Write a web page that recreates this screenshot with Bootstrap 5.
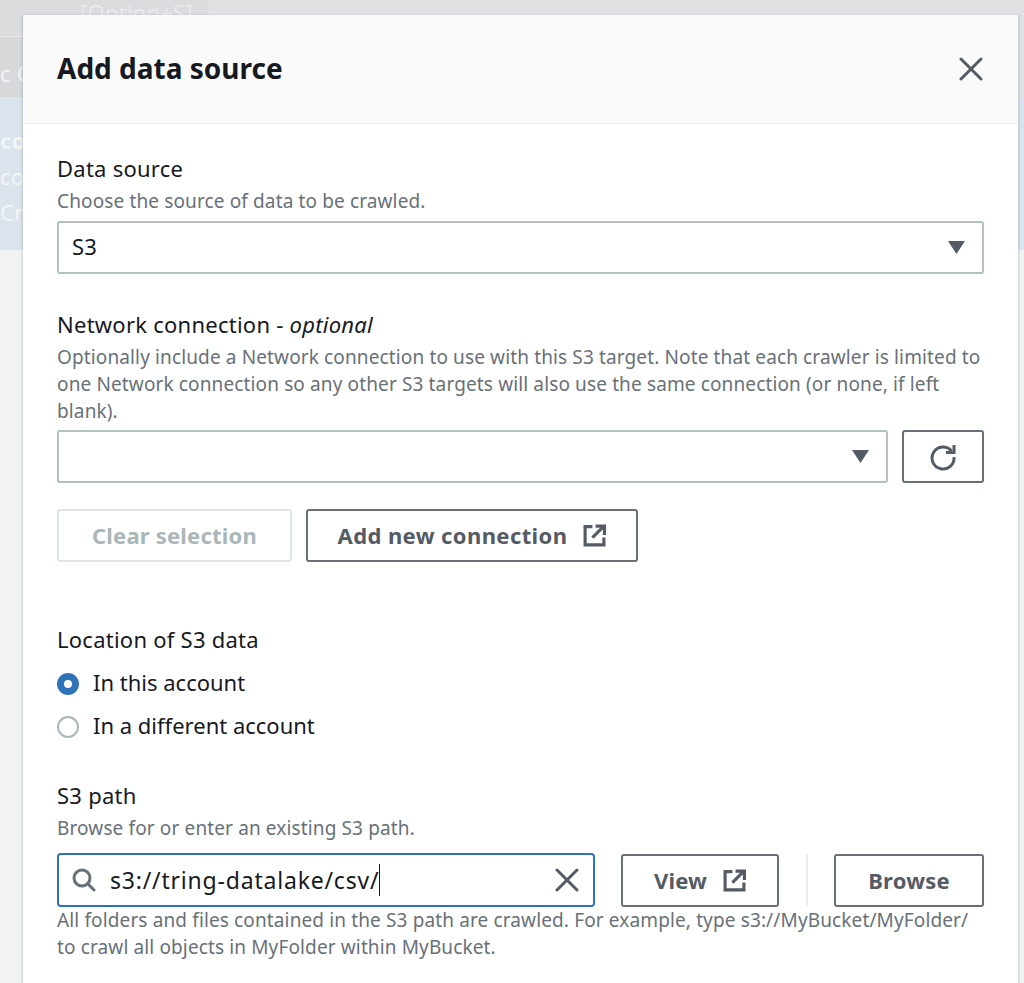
<!DOCTYPE html>
<html lang="en">
<head>
  <meta charset="UTF-8">
  <title>Add data source</title>
  <meta name="viewport" content="width=device-width, initial-scale=1">
  <link href="https://cdn.jsdelivr.net/npm/bootstrap@5.3.3/dist/css/bootstrap.min.css" rel="stylesheet">
  <style>
    html, body {
      height: 100%;
      overflow: hidden;
    }

    body {
      background-color: #f1f3f3;
      font-family: "Noto Sans", "Liberation Sans", sans-serif;
      color: #16191f;
      font-size: 22px;
      letter-spacing: .25px;
    }

    .backdrop-page {
      position: absolute;
      inset: 0;
      color: #f2f4f5;
    }

    .backdrop-top {
      height: 97px;
      background-color: #dfe1e3;
    }

    .backdrop-tab {
      width: 210px;
      height: 37px;
      background-color: #dadcde;
      border-right: 1px solid #e8e9ea;
      border-bottom: 1px solid #e8e9ea;
      padding-left: 80px;
      line-height: 24px;
      color: #e9eaeb;
    }

    .backdrop-cell {
      height: 60px;
      width: 23px;
      overflow: hidden;
      white-space: nowrap;
      background-color: #d6d8da;
      line-height: 72px;
    }

    .backdrop-rows {
      height: 153px;
      background-color: #dbe4ec;
      padding-top: 25px;
      line-height: 36px;
    }

    .modal-box {
      position: absolute;
      left: 23px;
      top: 15px;
      width: 995px;
      height: 968px;
      background-color: #fff;
      box-shadow: 0 1px 2px 1px rgba(0, 28, 36, .16);
    }

    .modal-head {
      height: 109px;
      background-color: #fafafa;
      border-bottom: 1px solid #eaeded;
      padding: 0 35px 0 34px;
    }

    .modal-head h1 {
      font-size: 28px;
      font-weight: 700;
      letter-spacing: 0;
      margin: 0;
    }

    .modal-form {
      padding: 29px 34px 0;
    }

    .field-label {
      line-height: 30px;
      padding-bottom: 2px;
    }

    .field-hint {
      font-size: 19px;
      line-height: 27px;
      letter-spacing: .13px;
      color: #687078;
      margin-top: 3px;
    }

    .select-box {
      height: 53px;
      border: 2px solid #b4c0c1;
      border-radius: 3px;
      padding: 0 17px 0 13px;
      margin-top: 6px;
      background-color: #fff;
    }

    .select-value {
      padding-bottom: 2px;
    }

    .caret-down {
      width: 17px;
      height: 13px;
      color: #545b64;
    }

    .btn-aws {
      height: 53px;
      border: 2px solid #6a7078;
      border-radius: 3px;
      background-color: #fff;
      color: #545b64;
      font-size: 22px;
      font-weight: 700;
      letter-spacing: .2px;
      padding: 0;
    }

    .btn-aws:disabled {
      border-color: #dfe4e4;
      color: #aab7b8;
      background-color: #fff;
      opacity: 1;
    }

    .btn-refresh {
      width: 82px;
      flex: none;
    }

    .btn-clear {
      width: 235px;
    }

    .btn-add {
      width: 332px;
      letter-spacing: .4px;
    }

    .btn-view {
      width: 158px;
      flex: none;
      margin-left: 26px;
    }

    .btn-browse {
      width: 150px;
      flex: none;
    }

    .gap-row {
      gap: 14px;
    }

    .network-title {
      margin-top: 35px;
    }

    .network-select {
      margin-top: 5px;
    }

    .connection-actions {
      margin-top: 26px;
    }

    .location-title {
      margin-top: 62px;
    }

    .radio-first {
      margin-top: 6px;
    }

    .radio-row {
      height: 43px;
      gap: 14px;
      letter-spacing: 0;
    }

    .radio-text {
      padding-bottom: 2px;
    }

    .radio-mark {
      width: 22px;
      height: 22px;
      border-radius: 50%;
      border: 2px solid #aab7b8;
      background-color: #fff;
      flex: none;
    }

    .radio-mark.is-on {
      border: 7px solid #2e73b8;
    }

    .s3-title {
      margin-top: 32px;
    }

    .s3-row {
      margin-top: 11px;
    }

    .search-box {
      width: 538px;
      flex: none;
      height: 54px;
      border: 2.5px solid #2e73b8;
      border-radius: 4px;
      padding: 0 14px 0 13px;
    }

    .search-text {
      border-right: 1px solid #16191f;
      font-size: 23px;
      letter-spacing: .8px;
      line-height: 32px;
      margin-left: 14px;
    }

    .split-line {
      width: 2px;
      height: 53px;
      background-color: #eceeee;
      flex: none;
      margin: 0 26px 0 27px;
    }

    .hint-under {
      margin-top: 0;
    }
  </style>
</head>
<body>

<div class="backdrop-page">
  <div class="backdrop-top">
    <div class="backdrop-tab">[Option+S]</div>
    <div class="backdrop-cell">c C</div>
  </div>
  <div class="backdrop-rows">
    <div class="fw-bold">co</div>
    <div>co</div>
    <div>Cra</div>
  </div>
</div>

<div class="modal-box">
  <div class="modal-head d-flex align-items-center justify-content-between">
    <h1>Add data source</h1>
    <svg width="24" height="24" viewBox="0 0 24 24" fill="none" stroke="#545b64" stroke-width="3" stroke-linecap="round"><path d="M2 2 22 22M22 2 2 22"/></svg>
  </div>

  <form class="modal-form">
    <div class="field-label">Data source</div>
    <div class="field-hint">Choose the source of data to be crawled.</div>
    <div class="select-box d-flex align-items-center justify-content-between">
      <span class="select-value">S3</span>
      <svg class="caret-down" viewBox="0 0 17 13"><path fill="currentColor" d="M0 0h17L8.500 13z"/></svg>
    </div>

    <div class="field-label network-title">Network connection - <em>optional</em></div>
    <div class="field-hint">Optionally include a Network connection to use with this S3 target. Note that each crawler is limited to one Network connection so any other S3 targets will also use the same connection (or none, if left blank).</div>
    <div class="d-flex gap-row network-select">
      <div class="select-box flex-grow-1 d-flex align-items-center justify-content-end mt-0">
        <svg class="caret-down" viewBox="0 0 17 13"><path fill="currentColor" d="M0 0h17L8.500 13z"/></svg>
      </div>
      <button type="button" class="btn btn-aws btn-refresh d-flex align-items-center justify-content-center">
        <svg width="28" height="28" viewBox="0 0 28 28" fill="none" stroke="currentColor" stroke-width="3"><path d="M22.500 8A11 11 0 1 0 25 14"/><path d="M25 2v7.500h-8"/></svg>
      </button>
    </div>

    <div class="d-flex gap-row connection-actions">
      <button type="button" class="btn btn-aws btn-clear" disabled>Clear selection</button>
      <button type="button" class="btn btn-aws btn-add d-flex align-items-center justify-content-center gap-3">
        Add new connection
        <svg width="23" height="23" viewBox="0 0 22 22" fill="none" stroke="currentColor" stroke-width="3"><path d="M9 2.500H2V20h18v-7M12 2h8.500v8.500M20 2 9 13"/></svg>
      </button>
    </div>

    <div class="field-label location-title">Location of S3 data</div>
    <div class="radio-row d-flex align-items-center radio-first">
      <span class="radio-mark is-on"></span>
      <span class="radio-text">In this account</span>
    </div>
    <div class="radio-row d-flex align-items-center">
      <span class="radio-mark"></span>
      <span class="radio-text">In a different account</span>
    </div>

    <div class="field-label s3-title">S3 path</div>
    <div class="field-hint">Browse for or enter an existing S3 path.</div>
    <div class="d-flex align-items-center s3-row">
      <div class="search-box d-flex align-items-center">
        <svg width="24" height="24" viewBox="0 0 24 24" fill="none" stroke="#687078" stroke-width="3" stroke-linecap="round"><circle cx="10" cy="10" r="8"/><path d="M16 16l6 6"/></svg>
        <span class="search-text">s3://tring-datalake/csv/</span>
        <svg class="ms-auto" width="24" height="24" viewBox="0 0 24 24" fill="none" stroke="#545b64" stroke-width="3" stroke-linecap="round"><path d="M2 2 22 22M22 2 2 22"/></svg>
      </div>
      <button type="button" class="btn btn-aws btn-view d-flex align-items-center justify-content-center gap-3">
        View
        <svg width="23" height="23" viewBox="0 0 22 22" fill="none" stroke="currentColor" stroke-width="3"><path d="M9 2.500H2V20h18v-7M12 2h8.500v8.500M20 2 9 13"/></svg>
      </button>
      <span class="split-line"></span>
      <button type="button" class="btn btn-aws btn-browse">Browse</button>
    </div>
    <div class="field-hint hint-under">All folders and files contained in the S3 path are crawled. For example, type s3://MyBucket/MyFolder/ to crawl all objects in MyFolder within MyBucket.</div>
  </form>
</div>

</body>
</html>
